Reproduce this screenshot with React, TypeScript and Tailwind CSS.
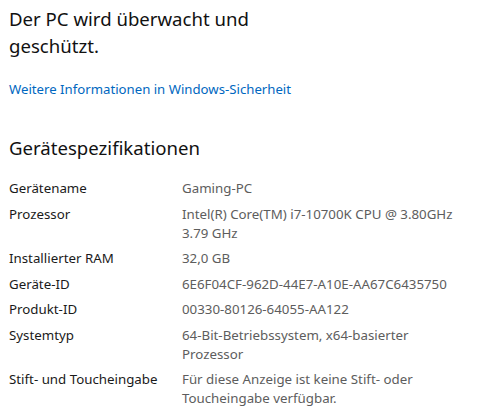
const specs: { label: string; value: string }[] = [
  { label: 'Gerätename', value: 'Gaming-PC' },
  { label: 'Prozessor', value: 'Intel(R) Core(TM) i7-10700K CPU @ 3.80GHz 3.79 GHz' },
  { label: 'Installierter RAM', value: '32,0 GB' },
  { label: 'Geräte-ID', value: '6E6F04CF-962D-44E7-A10E-AA67C6435750' },
  { label: 'Produkt-ID', value: '00330-80126-64055-AA122' },
  { label: 'Systemtyp', value: '64-Bit-Betriebssystem, x64-basierter Prozessor' },
  { label: 'Stift- und Toucheingabe', value: 'Für diese Anzeige ist keine Stift- oder Toucheingabe verfügbar.' },
];

export default function App() {
  return (
    <div className="h-[417px] w-[479px] overflow-hidden bg-white px-[9px] pt-[5px] font-['Noto_Sans',sans-serif] text-black">
      <h1 className="w-[260px] text-[18.6px] leading-[27px] font-normal text-[#111]">
        Der PC wird überwacht und geschützt.
      </h1>
      <a href="#" className="mt-[21px] block text-[13.2px] leading-[19px] text-[#0067c0]">
        Weitere Informationen in Windows-Sicherheit
      </a>

      <h2 className="mt-[35px] text-[18.6px] leading-[27px] font-normal text-[#111]">
        Gerätespezifikationen
      </h2>
      <dl className="mt-[18px] grid grid-cols-[173px_1fr] gap-y-[6.5px] text-[13.3px] leading-[19px]">
        {specs.map((s) => (
          <div key={s.label} className="contents">
            <dt className="text-[#1a1a1a]">{s.label}</dt>
            <dd className="pr-[10px] text-[#5d5d5d]">{s.value}</dd>
          </div>
        ))}
      </dl>
    </div>
  );
}
